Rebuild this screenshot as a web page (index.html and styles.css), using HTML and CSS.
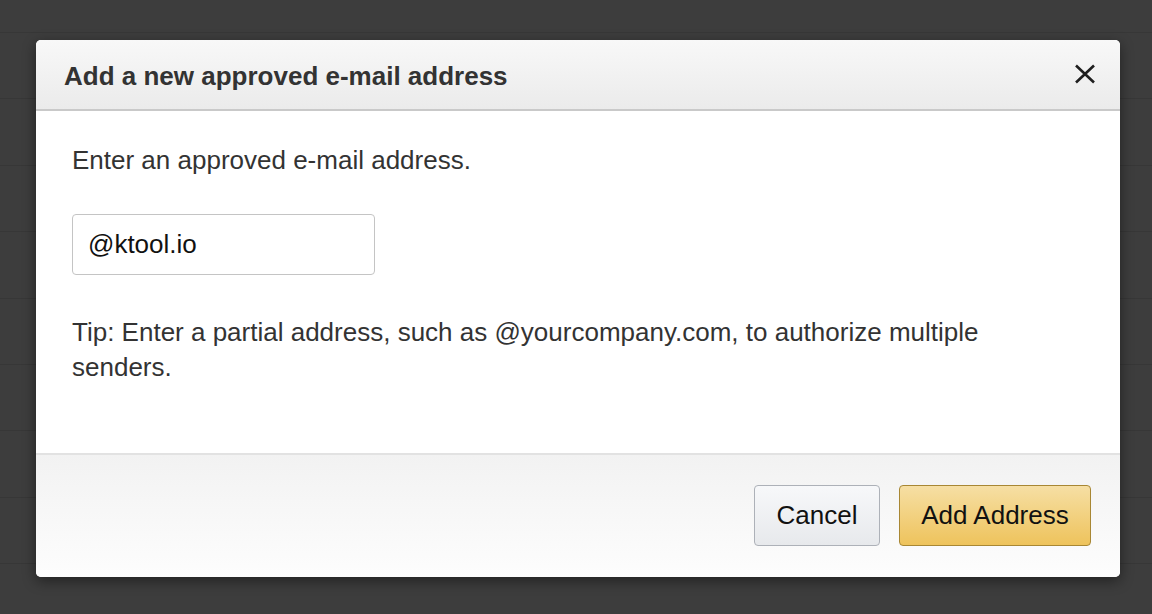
FILE: index.html
```html
<!DOCTYPE html>
<html>
<head>
<meta charset="utf-8">
<link rel="stylesheet" href="styles.css">
</head>
<body>
<div class="backdrop">
  <div class="rows">
    <div class="row first"></div>
    <div class="row"></div>
    <div class="row"></div>
    <div class="row"></div>
    <div class="row"></div>
    <div class="row"></div>
    <div class="row"></div>
    <div class="row"></div>
    <div class="row"></div>
    <div class="row"></div>
  </div>
  <div class="modal">
    <div class="modal-header">
      <h1 class="modal-title">Add a new approved e-mail address</h1>
      <button class="close" aria-label="Close">
        <svg width="22" height="20" viewBox="0 0 22 20"><path d="M2 1.5 L20 18.5 M20 1.5 L2 18.5" stroke="#1f1f1f" stroke-width="2.6" fill="none"/></svg>
      </button>
    </div>
    <div class="modal-body">
      <p class="lead">Enter an approved e-mail address.</p>
      <input class="email" type="text" value="@ktool.io">
      <p class="tip">Tip: Enter a partial address, such as @yourcompany.com, to authorize multiple senders.</p>
    </div>
    <div class="modal-footer">
      <button class="btn btn-cancel">Cancel</button>
      <button class="btn btn-primary">Add Address</button>
    </div>
  </div>
</div>
</body>
</html>
```
FILE: styles.css
```css
html, body {
  margin: 0;
  padding: 0;
  height: 100%;
}
body {
  font-family: "Liberation Sans", Arial, sans-serif;
  background: #3d3d3d;
  overflow: hidden;
}
.backdrop {
  position: relative;
  width: 1152px;
  height: 614px;
}
.rows {
  display: flex;
  flex-direction: column;
}
.row {
  height: 65.4px;
  border-bottom: 1px solid #373737;
  flex: none;
}
.row.first {
  height: 32px;
}
.modal {
  position: absolute;
  left: 36px;
  top: 40px;
  width: 1084px;
  background: #fff;
  border-radius: 5px;
  box-shadow: 0 4px 14px rgba(0,0,0,0.45);
  overflow: hidden;
  display: flex;
  flex-direction: column;
}
.modal-header {
  height: 71px;
  box-sizing: border-box;
  display: flex;
  align-items: center;
  justify-content: space-between;
  padding: 2px 24px 0 28px;
  background: linear-gradient(#f8f8f8, #ebebeb);
  border-bottom: 2px solid #c9c9c9;
}
.modal-title {
  margin: 0;
  font-size: 26px;
  line-height: 30px;
  font-weight: bold;
  color: #333;
}
.close {
  border: 0;
  background: none;
  padding: 0;
  width: 22px;
  height: 22px;
  margin-bottom: 3px;
  display: flex;
  align-items: center;
  justify-content: center;
}
.modal-body {
  padding: 34px 36px 0;
  height: 342px;
  box-sizing: border-box;
  color: #333;
}
.lead {
  margin: 0;
  font-size: 26px;
  line-height: 30px;
}
.email {
  display: block;
  margin-top: 39px;
  width: 303px;
  height: 61px;
  box-sizing: border-box;
  border: 1px solid #c4c4c4;
  border-radius: 4px;
  padding: 0 15px;
  font-family: "Liberation Sans", Arial, sans-serif;
  font-size: 26px;
  color: #111;
  outline: none;
}
.tip {
  margin: 40px 0 0;
  max-width: 960px;
  font-size: 26px;
  line-height: 35px;
}
.modal-footer {
  border-top: 2px solid #e2e2e2;
  background: linear-gradient(#f2f2f2, #fdfdfd);
  display: flex;
  justify-content: flex-end;
  gap: 19px;
  padding: 30px 29px 31px;
}
.btn {
  height: 61px;
  border-radius: 4px;
  font-family: "Liberation Sans", Arial, sans-serif;
  font-size: 26px;
  color: #111;
  padding: 0;
}
.btn-cancel {
  width: 126px;
  background: linear-gradient(#f7f8fa, #e7e9ec);
  border: 1px solid #adb1b8;
}
.btn-primary {
  width: 192px;
  background: linear-gradient(#f6dfa4, #eec35c);
  border: 1px solid #a88734;
}
```
